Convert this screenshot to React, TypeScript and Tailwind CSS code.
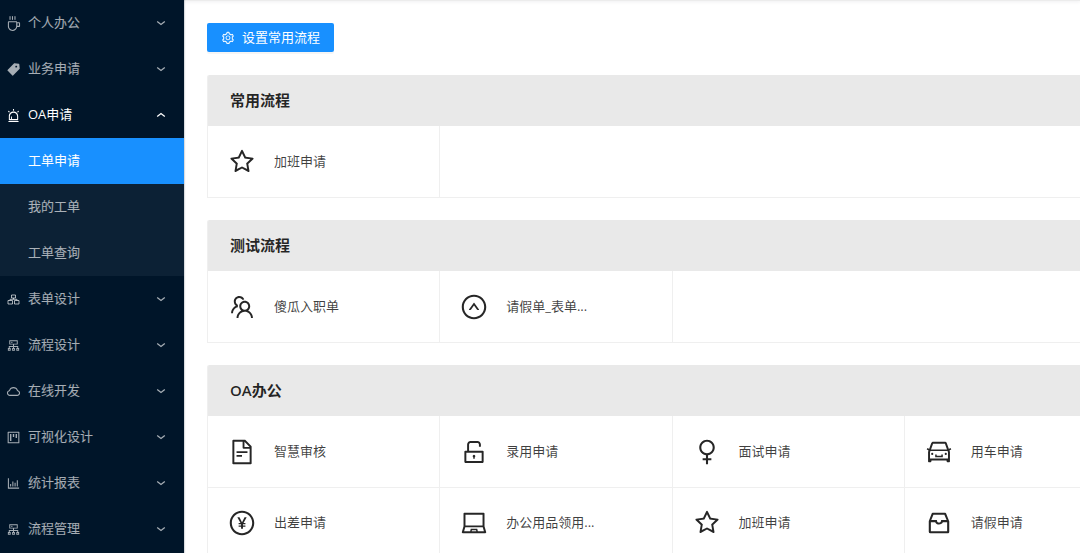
import React, { useState } from "react";
import type { IconType } from "react-icons";
import {
  AiFillTag,
  AiOutlineAlert,
  AiOutlineBarChart,
  AiOutlineCar,
  AiOutlineCloud,
  AiOutlineCluster,
  AiOutlineCoffee,
  AiOutlineFileText,
  AiOutlineInbox,
  AiOutlineLaptop,
  AiOutlinePayCircle,
  AiOutlineProject,
  AiOutlineSetting,
  AiOutlineStar,
  AiOutlineTeam,
  AiOutlineUnlock,
  AiOutlineUpCircle,
  AiOutlineWoman,
} from "react-icons/ai";

// three linked boxes, flatter than the apartment icon of the package
const FormIcon: IconType = ({ className }) => (
  <svg className={className} viewBox="0 0 15 15" fill="none" stroke="currentColor" strokeWidth="1">
    <path d="M5.5 3h4v3h-4zM2 8.5h4.5V12H2zM8.5 8.5H13V12H8.5zM7.5 6v1.3M4 8.5V7.3h7v1.2" />
  </svg>
);

type MenuItem = { label: string; icon: IconType; children?: string[] };
type Flow = { label: string; icon: IconType };

const menu: MenuItem[] = [
  { label: "个人办公", icon: AiOutlineCoffee },
  { label: "业务申请", icon: AiFillTag },
  { label: "OA申请", icon: AiOutlineAlert, children: ["工单申请", "我的工单", "工单查询"] },
  { label: "表单设计", icon: FormIcon },
  { label: "流程设计", icon: AiOutlineCluster },
  { label: "在线开发", icon: AiOutlineCloud },
  { label: "可视化设计", icon: AiOutlineProject },
  { label: "统计报表", icon: AiOutlineBarChart },
  { label: "流程管理", icon: AiOutlineCluster },
];

const groups: { title: string; flows: Flow[] }[] = [
  { title: "常用流程", flows: [{ label: "加班申请", icon: AiOutlineStar }] },
  {
    title: "测试流程",
    flows: [
      { label: "傻瓜入职单", icon: AiOutlineTeam },
      { label: "请假单_表单...", icon: AiOutlineUpCircle },
    ],
  },
  {
    title: "OA办公",
    flows: [
      { label: "智慧审核", icon: AiOutlineFileText },
      { label: "录用申请", icon: AiOutlineUnlock },
      { label: "面试申请", icon: AiOutlineWoman },
      { label: "用车申请", icon: AiOutlineCar },
      { label: "出差申请", icon: AiOutlinePayCircle },
      { label: "办公用品领用...", icon: AiOutlineLaptop },
      { label: "加班申请", icon: AiOutlineStar },
      { label: "请假申请", icon: AiOutlineInbox },
    ],
  },
];

const Arrow = ({ open }: { open: boolean }) => (
  <svg className="h-2 w-2.5" viewBox="0 0 10 8" fill="none" stroke="currentColor" strokeWidth="1.3">
    <path d={open ? "M1.2 5.6 5 2.6l3.8 3" : "M1.2 2.4 5 5.4l3.8-3"} />
  </svg>
);

const Sidebar = () => {
  const [openKey, setOpenKey] = useState("OA申请");
  const [active, setActive] = useState("工单申请");

  return (
    <nav className="z-10 w-[184px] shrink-0 bg-[#001529] text-[13px] text-white/65 shadow-[1px_0_1px_rgba(0,21,41,0.15)]">
      {menu.map(({ label, icon: Icon, children }) => {
        const open = openKey === label;
        return (
          <div key={label}>
            <button
              onClick={() => setOpenKey(open ? "" : label)}
              aria-expanded={open}
              className={`flex h-[46px] w-full items-center gap-[7px] pr-[18px] pl-1.5 text-left ${open ? "text-white" : ""}`}
            >
              <Icon className="size-[15px] shrink-0" />
              <span className="flex-1">{label}</span>
              <Arrow open={open} />
            </button>
            {open && children && (
              <div className="bg-[#0c2135]">
                {children.map((child) => (
                  <a
                    key={child}
                    href="#"
                    onClick={() => setActive(child)}
                    className={`flex h-[46px] items-center pl-7 hover:text-white ${active === child ? "bg-[#1890ff] text-white" : ""}`}
                  >
                    {child}
                  </a>
                ))}
              </div>
            )}
          </div>
        );
      })}
    </nav>
  );
};

const FlowGroup = ({ title, flows }: { title: string; flows: Flow[] }) => (
  <section className="min-w-[930px] overflow-hidden rounded-t-xs border-l border-[#efefef]">
    <h2 className="flex h-[51px] items-center bg-[#e9e9e9] pl-[22px] text-[15px] font-semibold text-black/85">
      {title}
    </h2>
    <div className="grid grid-cols-4 border-b border-[#efefef]">
      {flows.map(({ label, icon: Icon }, i) => (
        <a
          key={label}
          href="#"
          className={`flex h-[71px] items-center gap-[18px] border-r border-[#efefef] pl-5 hover:text-[#1890ff] ${i >= 4 ? "border-t" : ""}`}
        >
          <Icon className="size-7 shrink-0 text-black/85" />
          <span>{label}</span>
        </a>
      ))}
    </div>
  </section>
);

export default function App() {
  return (
    <div className="flex h-screen overflow-hidden bg-white font-['Open_Sans','Noto_Sans_CJK_SC',sans-serif]">
      <Sidebar />
      <main className="min-w-0 flex-1 overflow-hidden text-[13px] text-black/75">
        <div className="h-px bg-[#ececec] shadow-[0_1px_3px_rgba(0,21,41,0.12)]" />
        <div className="flex flex-col items-start gap-[23px] pt-[22px] pl-[23px]">
          <button className="flex h-[29px] items-center gap-[7px] rounded-xs bg-[#1890ff] px-3.5 text-white shadow-[0_2px_0_rgba(0,0,0,0.04)] hover:bg-[#40a9ff]">
            <AiOutlineSetting className="size-3.5" />
            设置常用流程
          </button>
          <div className="flex flex-col gap-[22px]">
            {groups.map((group) => (
              <FlowGroup key={group.title} {...group} />
            ))}
          </div>
        </div>
      </main>
    </div>
  );
}
